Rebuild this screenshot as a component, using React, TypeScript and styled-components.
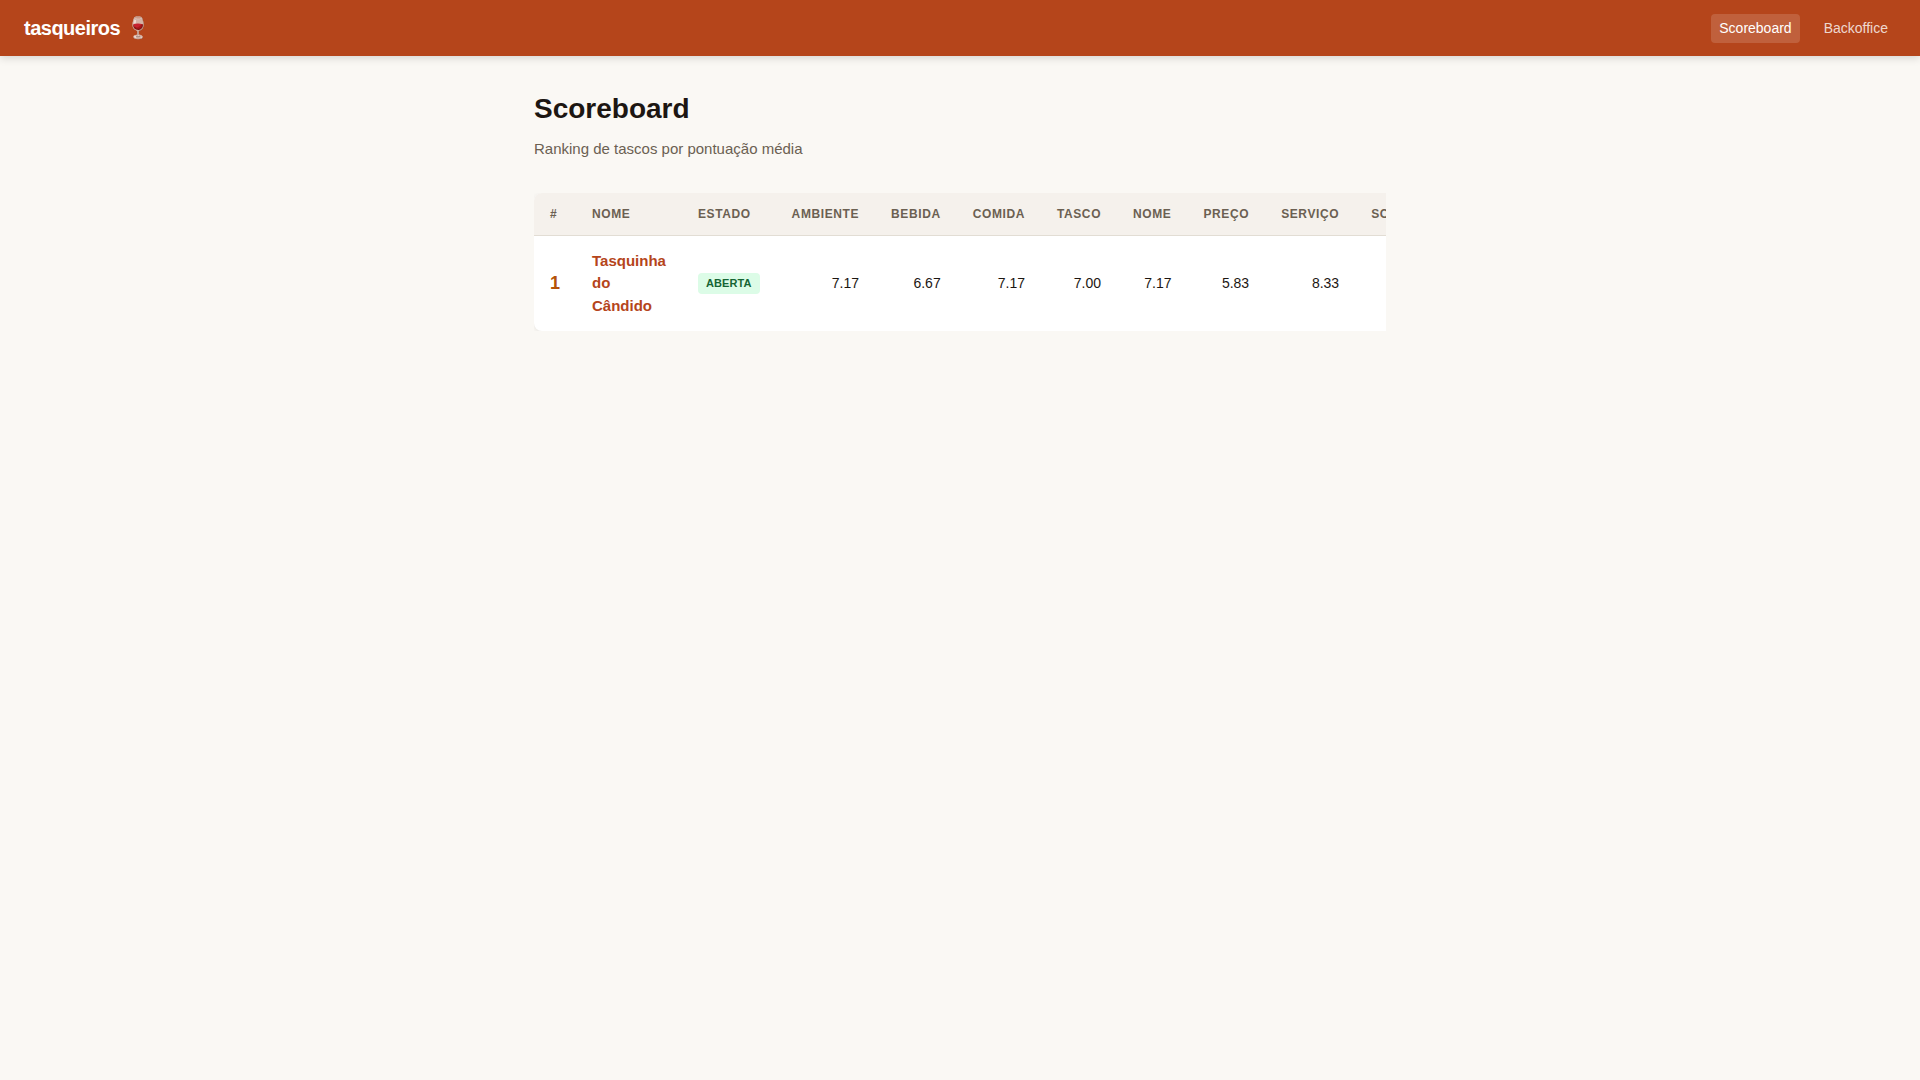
import React from "react";
import styled, { createGlobalStyle } from "styled-components";

const GlobalStyle = createGlobalStyle`
  *, *::before, *::after { box-sizing: border-box; }
  body {
    margin: 0;
    background: #faf8f4;
    color: #1c1612;
    font-family: "Liberation Sans", Arial, sans-serif;
    font-size: 16px;
    line-height: 1.5;
  }
`;

const Header = styled.header`
  display: flex;
  align-items: center;
  justify-content: space-between;
  height: 56px;
  padding: 0 24px;
  background: #b5451b;
  box-shadow: 0 2px 8px rgba(0, 0, 0, 0.15);
`;

const Brand = styled.a`
  color: #ffffff;
  font-size: 20px;
  font-weight: 700;
  line-height: 30px;
  letter-spacing: -0.5px;
  text-decoration: none;
`;

const BrandIcon = styled.span`
  font-size: 21px;
  opacity: 0.8;
`;

const Nav = styled.nav`
  display: flex;
  gap: 16px;
`;

const NavLink = styled.a<{ $active?: boolean }>`
  padding: 4px 8px;
  border-radius: 4px;
  background: ${(p) => (p.$active ? "rgba(255, 255, 255, 0.15)" : "transparent")};
  color: ${(p) => (p.$active ? "#ffffff" : "rgba(255, 255, 255, 0.8)")};
  font-size: 14px;
  text-decoration: none;
`;

const Main = styled.main`
  max-width: 900px;
  margin: 0 auto;
  padding: 32px 24px;
`;

const Title = styled.h1`
  margin: 0 0 8px;
  font-size: 28px;
  font-weight: 700;
`;

const Subtitle = styled.p`
  margin: 0 0 32px;
  color: #6b6052;
  font-size: 15px;
`;

const TableScroll = styled.div`
  overflow-x: auto;
`;

const Table = styled.table`
  width: 100%;
  border-collapse: collapse;
  border-radius: 8px;
  overflow: hidden;
  background: #ffffff;
  box-shadow: 0 1px 4px rgba(0, 0, 0, 0.08);
`;

const HeadCell = styled.th<{ $numeric?: boolean }>`
  padding: 12px 16px;
  border-bottom: 1px solid #e2ddd4;
  background: #f5f1ec;
  color: #6b6052;
  font-size: 12px;
  font-weight: 700;
  letter-spacing: 0.05em;
  text-align: ${(p) => (p.$numeric ? "right" : "left")};
  text-transform: uppercase;
  white-space: nowrap;
`;

const Cell = styled.td<{ $numeric?: boolean }>`
  padding: 14px 16px;
  font-size: 14px;
  font-variant-numeric: tabular-nums;
  text-align: ${(p) => (p.$numeric ? "right" : "left")};
  vertical-align: middle;
`;

const Rank = styled.span`
  color: #b45309;
  font-size: 18px;
  font-weight: 700;
`;

const PlaceLink = styled.a`
  color: #b5451b;
  font-size: 15px;
  font-weight: 700;
  text-decoration: none;
`;

const Badge = styled.span`
  display: inline-block;
  padding: 3px 8px;
  border-radius: 4px;
  background: #dcfce7;
  color: #166534;
  font-size: 11px;
  font-weight: 700;
  line-height: 15px;
  letter-spacing: 0.01em;
  text-transform: uppercase;
  vertical-align: top;
`;

const criteria = ["Ambiente", "Bebida", "Comida", "Tasco", "Nome", "Preço", "Serviço", "Score"];

const places = [
  {
    name: "Tasquinha do Cândido",
    status: "Aberta",
    scores: [7.17, 6.67, 7.17, 7.0, 7.17, 5.83, 8.33, 7.05],
  },
];

export default function App() {
  return (
    <>
      <GlobalStyle />
      <Header>
        <Brand href="#">tasqueiros <BrandIcon>🍷</BrandIcon></Brand>
        <Nav>
          <NavLink href="#scoreboard" $active aria-current="page">Scoreboard</NavLink>
          <NavLink href="#backoffice">Backoffice</NavLink>
        </Nav>
      </Header>
      <Main>
        <Title>Scoreboard</Title>
        <Subtitle>Ranking de tascos por pontuação média</Subtitle>
        <TableScroll>
          <Table>
            <thead>
              <tr>
                <HeadCell scope="col">#</HeadCell>
                <HeadCell scope="col">Nome</HeadCell>
                <HeadCell scope="col">Estado</HeadCell>
                {criteria.map((label) => (
                  <HeadCell key={label} scope="col" $numeric>{label}</HeadCell>
                ))}
              </tr>
            </thead>
            <tbody>
              {places.map((place, index) => (
                <tr key={place.name}>
                  <Cell><Rank>{index + 1}</Rank></Cell>
                  <Cell><PlaceLink href="#place">{place.name}</PlaceLink></Cell>
                  <Cell><Badge>{place.status}</Badge></Cell>
                  {place.scores.map((score, i) => (
                    <Cell key={criteria[i]} $numeric>{score.toFixed(2)}</Cell>
                  ))}
                </tr>
              ))}
            </tbody>
          </Table>
        </TableScroll>
      </Main>
    </>
  );
}
